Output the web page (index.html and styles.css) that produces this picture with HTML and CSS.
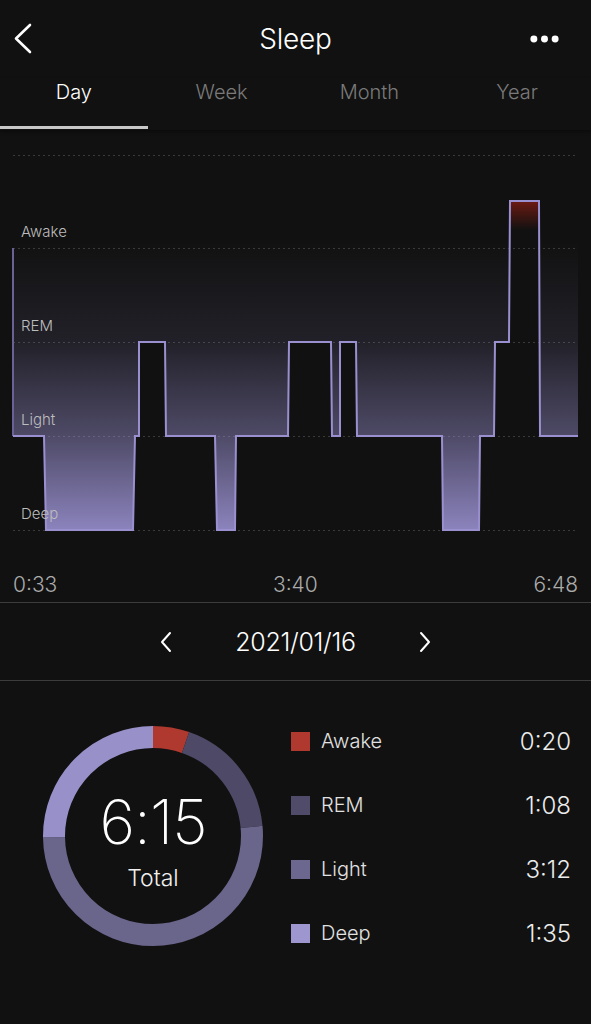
FILE: index.html
```html
<!DOCTYPE html>
<html lang="en">
<head>
<meta charset="utf-8">
<title>Sleep</title>
<link rel="stylesheet" href="styles.css">
</head>
<body>
<div class="app">
  <header class="header">
    <div class="hdr-left">
      <svg class="back-icon" width="20" height="32" viewBox="0 0 20 32"><polyline points="17,2 3,15.5 17,29" fill="none" stroke="#fff" stroke-width="2.6" stroke-linecap="round" stroke-linejoin="round"/></svg>
    </div>
    <div class="hdr-title">Sleep</div>
    <div class="hdr-right">
      <svg width="30" height="10" viewBox="0 0 30 10"><circle cx="4" cy="5" r="3.6" fill="#fff"/><circle cx="15" cy="5" r="3.6" fill="#fff"/><circle cx="26" cy="5" r="3.6" fill="#fff"/></svg>
    </div>
  </header>

  <nav class="tabs">
    <div class="tab active">Day</div>
    <div class="tab">Week</div>
    <div class="tab">Month</div>
    <div class="tab">Year</div>
  </nav>

  <section class="chart">
    <svg class="chart-svg" width="591" height="430" viewBox="0 0 591 430">
      <defs>
        <linearGradient id="fillGrad" gradientUnits="userSpaceOnUse" x1="0" y1="110" x2="0" y2="400">
          <stop offset="0" stop-color="#9c93d4" stop-opacity="0"/>
          <stop offset="0.35" stop-color="#9c93d4" stop-opacity="0.12"/>
          <stop offset="0.676" stop-color="#9c93d4" stop-opacity="0.44"/>
          <stop offset="1" stop-color="#9c93d4" stop-opacity="0.88"/>
        </linearGradient>
        <linearGradient id="redGrad" x1="0" y1="0" x2="0" y2="1">
          <stop offset="0" stop-color="#6a1a12" stop-opacity="1"/>
          <stop offset="1" stop-color="#6a1a12" stop-opacity="0"/>
        </linearGradient>
      </defs>
      <g class="grid" stroke="#3a3a3a" stroke-width="1" stroke-dasharray="2 3">
        <line x1="13" y1="25.5" x2="578" y2="25.5"/>
        <line x1="13" y1="118.5" x2="578" y2="118.5"/>
        <line x1="13" y1="212.5" x2="578" y2="212.5"/>
        <line x1="13" y1="306.5" x2="578" y2="306.5"/>
        <line x1="13" y1="400.5" x2="578" y2="400.5"/>
      </g>
      <path d="M13,118 V306 H44 L46,400 H133 L135,306 H139 V212 H165 L166,306 H215 L217,400 H235 L236,306 H288 L289,212 H331 L332,306 H340 V212 H356 L357,306 H442 L443,400 H479 L480,306 H494 L495,212 H509 L510,71 H539 L540,306 H578 V0 H13 Z" fill="url(#fillGrad)"/>
      <rect x="511" y="72" width="27" height="28" fill="url(#redGrad)"/>
      <line x1="13" y1="118" x2="13" y2="306" stroke="#6a6296" stroke-width="2"/>
      <path d="M13,306 H44 L46,400 H133 L135,306 H139 V212 H165 L166,306 H215 L217,400 H235 L236,306 H288 L289,212 H331 L332,306 H340 V212 H356 L357,306 H442 L443,400 H479 L480,306 H494 L495,212 H509 L510,71 H539 L540,306 H578" fill="none" stroke="#9a90cf" stroke-width="2" stroke-linejoin="miter"/>
      <g class="lvl">
        <text x="21" y="107">Awake</text>
        <text x="21" y="201">REM</text>
        <text x="21" y="295">Light</text>
        <text x="21" y="389">Deep</text>
      </g>
    </svg>
    <div class="times">
      <span>0:33</span>
      <span>3:40</span>
      <span>6:48</span>
    </div>
  </section>

  <section class="date-row">
    <svg class="chev" width="12" height="22" viewBox="0 0 12 22"><polyline points="10,2 2,11 10,20" fill="none" stroke="#fff" stroke-width="2" stroke-linecap="round" stroke-linejoin="round"/></svg>
    <div class="date">2021/01/16</div>
    <svg class="chev" width="12" height="22" viewBox="0 0 12 22"><polyline points="2,2 10,11 2,20" fill="none" stroke="#fff" stroke-width="2" stroke-linecap="round" stroke-linejoin="round"/></svg>
  </section>

  <section class="summary">
    <div class="donut">
      <svg width="220" height="220" viewBox="0 0 220 220">
        <g transform="rotate(-90 110 110)" fill="none" stroke-width="22">
          <circle cx="110" cy="110" r="99" stroke="#b0392f" stroke-dasharray="33.18 588.86" stroke-dashoffset="0"/>
          <circle cx="110" cy="110" r="99" stroke="#4d4966" stroke-dasharray="112.79 509.25" stroke-dashoffset="-33.18"/>
          <circle cx="110" cy="110" r="99" stroke="#6a658b" stroke-dasharray="318.48 303.56" stroke-dashoffset="-145.97"/>
          <circle cx="110" cy="110" r="99" stroke="#9891c9" stroke-dasharray="157.59 464.45" stroke-dashoffset="-464.45"/>
        </g>
      </svg>
      <div class="donut-center">
        <div class="total-num">6:15</div>
        <div class="total-lbl">Total</div>
      </div>
    </div>
    <ul class="legend">
      <li class="leg-row"><span class="sw sw-awake"></span><span class="leg-name">Awake</span><span class="leg-val">0:20</span></li>
      <li class="leg-row"><span class="sw sw-rem"></span><span class="leg-name">REM</span><span class="leg-val">1:08</span></li>
      <li class="leg-row"><span class="sw sw-light"></span><span class="leg-name">Light</span><span class="leg-val">3:12</span></li>
      <li class="leg-row"><span class="sw sw-deep"></span><span class="leg-name">Deep</span><span class="leg-val">1:35</span></li>
    </ul>
  </section>
</div>
</body>
</html>
```

FILE: styles.css
```css
* { box-sizing: border-box; }
html, body { margin: 0; padding: 0; }
body {
  background: #111111;
  color: #ffffff;
  font-family: Inter, "Noto Sans", "Liberation Sans", sans-serif;
}
.app {
  width: 591px;
  height: 1024px;
  overflow: hidden;
}

/* Header */
.header {
  height: 78px;
  display: flex;
  align-items: center;
}
.hdr-left {
  width: 61px;
  padding-left: 13px;
  display: flex;
  align-items: center;
}
.hdr-title {
  flex: 1;
  text-align: center;
  font-size: 28px;
  font-weight: 300;
  letter-spacing: -0.2px;
}
.hdr-right {
  width: 61px;
  padding-right: 32px;
  display: flex;
  justify-content: flex-end;
  align-items: center;
}

/* Tabs */
.tabs {
  display: flex;
  height: 52px;
  box-shadow: 0 2px 3px rgba(0,0,0,0.35);
}
.tab {
  flex: 1;
  height: 51px;
  text-align: center;
  font-size: 20px;
  font-weight: 300;
  line-height: 28px;
  color: #7a7a7a;
  border-bottom: 3px solid transparent;
}
.tab.active {
  color: #ffffff;
  border-bottom-color: #c8c8c8;
}

/* Chart */
.chart-svg { display: block; }
.lvl text {
  font-family: Inter, "Noto Sans", sans-serif;
  font-size: 15px;
  font-weight: 300;
  fill: #bdbdbd;
}
.times {
  height: 42px;
  padding: 6px 13px 0;
  display: flex;
  justify-content: space-between;
  align-items: center;
  font-size: 21px;
  font-weight: 300;
  color: #ababab;
}

/* Date row */
.date-row {
  height: 79px;
  border-top: 1px solid #3c3c3c;
  border-bottom: 1px solid #3c3c3c;
  display: flex;
  justify-content: center;
  align-items: center;
}
.chev { display: block; }
.date {
  width: 247px;
  text-align: center;
  font-size: 25px;
  font-weight: 300;
  letter-spacing: -0.3px;
}

/* Summary */
.summary {
  display: flex;
  padding: 28px 0 0 43px;
}
.donut {
  position: relative;
  width: 220px;
  height: 220px;
  margin-top: 17px;
}
.donut svg { display: block; }
.donut-center {
  position: absolute;
  top: 58px;
  left: 0;
  right: 0;
  text-align: center;
}
.total-num {
  font-size: 61px;
  line-height: 76px;
  font-weight: 200;
  letter-spacing: -1px;
}
.total-lbl {
  margin-top: 3px;
  font-size: 23px;
  line-height: 30px;
  font-weight: 300;
  color: #f0f0f0;
}
.legend {
  list-style: none;
  margin: 0 0 0 28px;
  padding: 0;
  width: 280px;
}
.leg-row {
  height: 64px;
  display: flex;
  align-items: center;
}
.sw {
  width: 19px;
  height: 19px;
  margin-right: 11px;
  flex: none;
}
.sw-awake { background: #b0392f; }
.sw-rem { background: #4f4b68; }
.sw-light { background: #6c678e; }
.sw-deep { background: #9d96cf; }
.leg-name {
  flex: 1;
  font-size: 20px;
  font-weight: 300;
  color: #e2e2e2;
}
.leg-val {
  font-size: 24px;
  font-weight: 300;
  color: #ececec;
}
```
